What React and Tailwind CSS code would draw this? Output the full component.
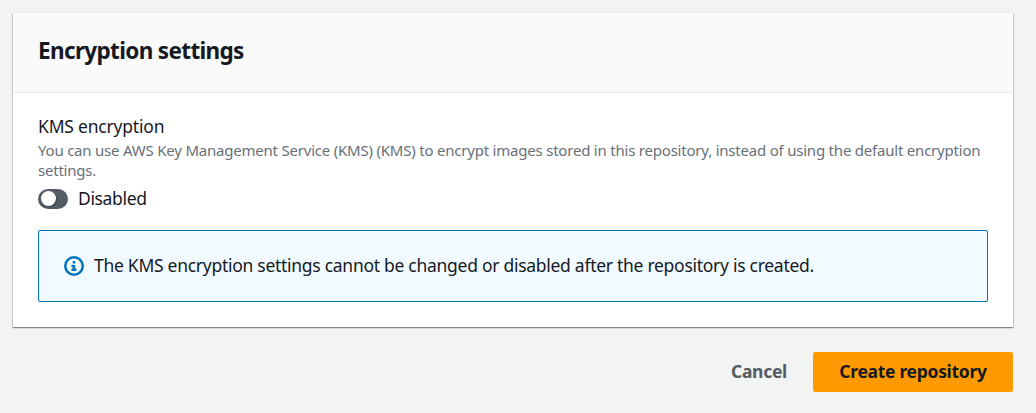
import React from "react";

function InfoIcon() {
  return (
    <svg className="size-5 shrink-0" viewBox="0 0 16 16" fill="none" stroke="#0073bb" strokeWidth="2">
      <circle cx="8" cy="8" r="7" />
      <path d="M8 11V8H6M10 11H6M8 6V4" strokeLinejoin="round" />
    </svg>
  );
}

function Toggle() {
  return (
    <button
      type="button"
      role="switch"
      aria-checked="false"
      aria-label="KMS encryption"
      className="flex h-5 w-[30px] items-center rounded-full bg-[#545b64] pl-[2.5px]"
    >
      <span className="size-[15px] rounded-full bg-white shadow-[1px_1px_1px_rgba(0,0,0,0.25)]" />
    </button>
  );
}

export default function App() {
  return (
    <div className="h-[413px] overflow-hidden bg-[#f2f3f3] pl-[13px] pr-[23px] pt-[13px] font-['Noto_Sans',sans-serif] text-[#16191f]">
      <section className="h-[314px] bg-white shadow-[0_1px_1px_0_rgba(0,28,36,0.3),1px_1px_1px_0_rgba(0,28,36,0.15),-1px_1px_1px_0_rgba(0,28,36,0.15),0_-1px_0_0_#eaeded]">
        <header className="flex h-20 items-center border-b border-[#eaeded] bg-[#fafafa] px-[25px] pb-[3px]">
          <h2 className="whitespace-nowrap text-[22.5px] font-bold leading-7 tracking-[-0.65px]">Encryption settings</h2>
        </header>
        <div className="px-[25px] pt-[20px]">
          <h3 className="text-[17.5px] leading-[27px] tracking-[-0.2px]">KMS encryption</h3>
          <p className="whitespace-nowrap text-[15px] leading-5 tracking-[-0.213px] text-[#687078]">
            You can use AWS Key Management Service (KMS) (KMS) to encrypt images stored in this repository, instead of using the default encryption
            <br />
            settings.
          </p>
          <div className="mt-[5px] flex h-[27px] items-center gap-[10px]">
            <Toggle />
            <span className="text-[17.5px] tracking-[-0.35px]">Disabled</span>
          </div>
          <div className="mt-[18px] flex h-[72px] items-center gap-[10px] rounded-[2px] border border-[#0073bb] bg-[#f1faff] px-[25px]">
            <InfoIcon />
            <span className="whitespace-nowrap pb-[2px] text-[17.5px] tracking-[-0.28px]">
              The KMS encryption settings cannot be changed or disabled after the repository is created.
            </span>
          </div>
        </div>
      </section>
      <div className="mt-[25px] flex h-10 items-center justify-end gap-[26px]">
        <button type="button" className="w-[56px] whitespace-nowrap pb-[2px] text-[17.5px] font-bold tracking-[-0.3px] text-[#545b64]">Cancel</button>
        <button type="button" className="h-10 w-[200px] whitespace-nowrap rounded-[2px] bg-[#ff9900] pb-[2px] text-[17.5px] font-bold tracking-[-0.3px]">
          Create repository
        </button>
      </div>
    </div>
  );
}
